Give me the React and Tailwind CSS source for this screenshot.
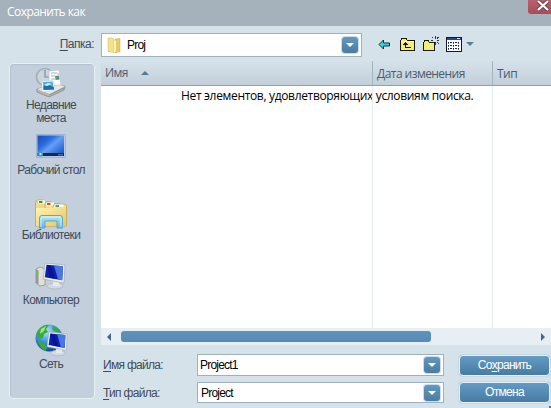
import React from 'react';

const ui = "font-['Liberation_Sans',sans-serif]";
const human = "font-['Open_Sans','Noto_Sans',sans-serif]";

function RecentIcon() {
  return (
    <svg width="32" height="31" viewBox="0 0 32 31">
      <circle cx="10" cy="10" r="8.5" fill="#cbd5dc" stroke="#a3adb3" strokeWidth="1.6" />
      <path d="M10 3v7h5" stroke="#7f8b95" strokeWidth="1.2" fill="none" />
      <path d="M2 22l18-5 10 2-1 4-15 7-12-5z" fill="#b9bab3" stroke="#85877f" strokeWidth=".8" />
      <path d="M2 22l13 5 15-8-10-2z" fill="#e9e8e0" />
      <path d="M14 4l10-1 2 15-12 1z" fill="#fbfcfb" stroke="#b6c3c6" strokeWidth=".6" />
      <path d="M16 6h6M16 9h4M16 12h4M22 7h2" stroke="#92a5b0" strokeWidth=".8" />
      <path d="M20 9l4-.4.6 4-4 .4z" fill="#4f9978" />
      <path d="M7 14l11-.5 2 10-13 1z" fill="#fff" stroke="#bed3dc" strokeWidth=".6" />
      <path d="M8 15l9.500-.5 1.600 8L8.500 23z" fill="#4dadea" />
      <path d="M8.500 19l4-2 6.500 3.500v2L8.500 23z" fill="#1f70a8" />
      <path d="M9 18l4-2 4 1-5 2z" fill="#d8f0f6" />
      <path d="M14 28l15-7" stroke="#8c8d85" />
    </svg>
  );
}

function DesktopIcon() {
  return (
    <svg width="30" height="24" viewBox="0 0 30 24">
      <defs>
        <linearGradient id="desk" x1="0" y1="0" x2="1" y2=".8">
          <stop stopColor="#164bb9" /><stop offset=".4" stopColor="#2e6de0" /><stop offset=".6" stopColor="#659ff3" /><stop offset="1" stopColor="#2263d4" />
        </linearGradient>
      </defs>
      <rect x=".5" y=".5" width="29" height="23" fill="#b9c9df" stroke="#a3b5cd" />
      <rect x="1.500" y="1.500" width="26.500" height="18" fill="url(#desk)" />
      <rect x="1.500" y="19" width="26.500" height="3" fill="#16294f" />
      <rect x="22" y="20" width="5" height="1.500" fill="#506a94" />
      <circle cx="4.500" cy="20" r="2.500" fill="#3c9fc0" />
      <circle cx="4.500" cy="20" r="1" fill="#c3f2f2" />
    </svg>
  );
}

function LibrariesIcon() {
  return (
    <svg width="32" height="30" viewBox="0 0 32 30">
      <defs>
        <linearGradient id="lib" x1="0" y1="0" x2="1" y2="1">
          <stop stopColor="#fff3b4" /><stop offset="1" stopColor="#eac65a" />
        </linearGradient>
        <linearGradient id="stand" x1="0" y1="0" x2="0" y2="1">
          <stop stopColor="#b7e9f8" /><stop offset="1" stopColor="#60b5dc" />
        </linearGradient>
      </defs>
      <path d="M.5 27V3l2-2h6l2 2h5l1 24z" fill="#f3d983" stroke="#c7a24b" strokeWidth=".8" />
      <rect x="3" y="1.500" width="7" height="3" fill="#fff" /><rect x="4" y="2" width="3.500" height="2" fill="#28a33b" />
      <path d="M10 27V5l1-2h6l2 2h6v22z" fill="#f7df8f" stroke="#c7a24b" strokeWidth=".8" />
      <rect x="11" y="3.500" width="8" height="3" fill="#fff" /><rect x="12" y="4" width="3.500" height="2" fill="#c94c30" />
      <path d="M18 27V7l1.500-2h10l2 2v20z" fill="#f7df8f" stroke="#c7a24b" strokeWidth=".8" />
      <rect x="19.500" y="5.500" width="9" height="3" fill="#fff" /><rect x="20.500" y="6" width="3.500" height="2" fill="#2d9fc1" />
      <path d="M1 9h16l2-1h12v19H1z" fill="url(#lib)" />
      <path d="M4.500 29V19q0-2.500 2.500-2.500h18q2.500 0 2.500 2.500v10h-5.500v-7h-12v7z" fill="url(#stand)" stroke="#5aa7cc" />
      <path d="M6 18h20M6 19v9M26 19v9" stroke="#e3faff" strokeWidth=".8" />
    </svg>
  );
}

function Monitor() {
  return (
    <g>
      <ellipse cx="12" cy="23" rx="8" ry="3" fill="#d3dade" stroke="#a4aeb7" strokeWidth=".6" />
      <path d="M10 17l6 1 1 5h-7z" fill="#e6eaec" />
      <path d="M2 0l20 2-1 18L0 16z" fill="#edf0ed" stroke="#9da9b5" strokeWidth=".7" />
      <path d="M3.500 1.700l16.500 1.600-.8 14L1.800 14.200z" fill="#0a20b4" />
      <path d="M11 2.500l9 .8-.8 14-4.200-.9z" fill="#4b75df" />
      <path d="M4 2l4 .4 4 13.400-5-1z" fill="#0b158a" />
    </g>
  );
}

function ComputerIcon() {
  return (
    <svg width="32" height="28" viewBox="0 0 32 28">
      <path d="M1 6l4-2 5 2v16l-5 1-4-3z" fill="#dfe0d7" stroke="#86887f" strokeWidth=".7" />
      <path d="M1 6l2.500 1.500v14L1 20z" fill="#96988f" />
      <path d="M1.500 9l2 1" stroke="#54d44b" strokeWidth="1.500" />
      <g transform="translate(8 0)"><Monitor /></g>
    </svg>
  );
}

function NetworkIcon() {
  return (
    <svg width="33" height="33" viewBox="0 0 33 33">
      <defs>
        <radialGradient id="globe" cx=".4" cy=".25" r=".8">
          <stop stopColor="#b2eaff" /><stop offset=".5" stopColor="#3c91da" /><stop offset="1" stopColor="#123d98" />
        </radialGradient>
      </defs>
      <circle cx="14" cy="14" r="13.500" fill="url(#globe)" />
      <path d="M5 4q5-4 9-3l-3 4 2 3-4 2-1 4-4 1-3-4q1-4 4-7M3 17l5 1 4 5-1 4q-6-2-8-10M18 2q6 2 8 7l-5-1-4-3z" fill="#3ba943" />
      <path d="M6 5l5-3-2 5-4 3z" fill="#a8e675" />
      <g transform="translate(12 8) scale(.92)"><Monitor /></g>
    </svg>
  );
}

function FolderIcon() {
  return (
    <svg width="14" height="17" viewBox="0 0 14 17">
      <path d="M1 1h5l1 2h6v12H1z" fill="#e6c760" />
      <path d="M1 1h4l2 2v13l-6-2z" fill="#f5e18c" stroke="#d7ba5c" strokeWidth=".5" />
      <path d="M8 2l5-.5v13L8 16z" fill="#e9cb66" stroke="#c9a949" strokeWidth=".5" />
      <path d="M7 3l2 1v10l-2 2z" fill="#fff4bc" />
    </svg>
  );
}

function BackIcon() {
  return (
    <svg width="13" height="11" viewBox="0 0 13 11">
      <path d="M1 5.500L5.500 1v3h6v3h-6v3z" fill="#32d9df" stroke="#122b31" />
    </svg>
  );
}

function UpIcon() {
  return (
    <svg width="15" height="13" viewBox="0 0 15 13" shapeRendering="crispEdges">
      <path d="M.5 12.500v-10l1-1v-1h5v1l1 1h7v10z" fill="#f1ef78" stroke="#171a18" />
      <path d="M1 3.500h13" stroke="#fffcbd" />
      <path d="M5.500 4v5.500H11M3 6.500h5M4 5.500h3" stroke="#111" fill="none" />
    </svg>
  );
}

function NewFolderIcon() {
  return (
    <svg width="17" height="16" viewBox="0 0 17 16" shapeRendering="crispEdges">
      <path d="M.5 14.500v-8l1-1v-1h4v1l1 1h5v8z" fill="#f1ef78" stroke="#171a18" />
      <path d="M12.500 0v3M12.500 6v3M8 4.500h2M14 4.500h2M9 1l1.500 1.500M15.500 1L14 2.500M14 6l2 2M10 6l1 1" stroke="#303738" />
    </svg>
  );
}

function ViewIcon() {
  return (
    <svg width="16" height="15" viewBox="0 0 16 15" shapeRendering="crispEdges">
      <rect x=".5" y=".5" width="15" height="14" fill="#fff" stroke="#15191d" />
      <rect x="1" y="1" width="14" height="2" fill="#234d93" />
      <path d="M11 1.500h3" stroke="#d9e3ef" />
      <path d="M2 5.500h12M2 8.500h12M2 11.500h12" stroke="#101b64" strokeWidth="1" strokeDasharray="1 1 2 1" />
      <path d="M2 6.500h12M2 9.500h12M2 12.500h12" stroke="#5b6391" strokeWidth="1" strokeDasharray="1 4" />
    </svg>
  );
}

function Drop() {
  return (
    <span className="flex h-4 w-4 shrink-0 items-center justify-center rounded-[3px] bg-linear-to-b from-[#6598bf] to-[#477ca3] shadow-[0_0_0_1px_#c9ddeb]">
      <svg width="8" height="4" viewBox="0 0 8 4"><path d="M0 0h8L4 4z" fill="#fff" /></svg>
    </span>
  );
}

function Place({ icon, children, className }) {
  return (
    <div className={`flex flex-col items-center ${className}`}>
      {icon}
      <div className="text-center text-[12px] leading-[13px] tracking-[-0.65px] whitespace-nowrap">{children}</div>
    </div>
  );
}

function Field({ label, hot, value, button, className, pad }) {
  return (
    <div className={`flex items-center ${className}`}>
      <div className="w-24 pl-[2px] text-[12px] tracking-[-0.7px]"><u className="underline-offset-2">{hot}</u>{label}</div>
      <div className={`flex h-full w-[247px] items-center justify-between border border-[#9eb1be] bg-white pr-[3px] text-black ${pad}`}>
        <span className="text-[12px] tracking-[-0.8px]">{value}</span>
        <Drop />
      </div>
      <button className="ml-[15px] h-[21px] w-[91px] rounded-[4px] border border-[#e5f1f8] bg-linear-to-b from-[#649bc4] to-[#477ba2] text-[12px] leading-[19px] tracking-[-0.7px] text-white shadow-[0_0_1px_#547a98]">{button}</button>
    </div>
  );
}

export default function App() {
  return (
    <div className={`relative flex h-[408px] w-[551px] flex-col overflow-hidden bg-[#d6e2ea] text-[#414b57] ${ui}`}>
      <header className="flex h-[26px] shrink-0 items-start justify-between bg-[#a5b2bb]">
        <h1 className={`pt-[3px] pl-[7px] text-[12px] leading-[18px] tracking-[-0.55px] text-white ${human}`}>Сохранить как</h1>
        <div className="flex h-[14px] w-[23px] justify-end rounded-bl-[3px] bg-linear-to-b from-[#b5606a] to-[#a94b58]">
          <svg width="15" height="12" viewBox="0 0 15 12"><path d="M2 1l10 9M12 1L2 10" stroke="#68434b" strokeWidth="4" /><path d="M2 1l10 9M12 1L2 10" stroke="#fff" strokeWidth="2.200" /></svg>
        </div>
      </header>

      <div className="flex h-[35px] shrink-0 items-start pt-[7px]">
        <div className="w-[101px] pr-[7px] text-right text-[12px] leading-[22px] tracking-[-0.5px]"><u className="underline-offset-2">П</u>апка:</div>
        <div className="flex h-6 w-[261px] items-center border border-[#9eb1be] bg-white pr-[3px] pl-[5px] text-black">
          <FolderIcon />
          <span className="flex-1 pl-[6px] text-[12px] tracking-[-0.8px]">Proj</span>
          <Drop />
        </div>
        <div className="flex h-[22px] items-center pl-4">
          <BackIcon />
          <span className="ml-[9px]"><UpIcon /></span>
          <span className="-mt-px ml-2"><NewFolderIcon /></span>
          <span className="mt-px ml-[6px]"><ViewIcon /></span>
          <svg className="ml-1" width="8" height="4" viewBox="0 0 8 4"><path d="M0 0h8L4 4z" fill="#5c7c99" /></svg>
        </div>
      </div>

      <div className="flex min-h-0 flex-1">
        <aside className="mt-[2px] ml-[9px] h-[336px] w-[86px] shrink-0 rounded-[4px] border border-[#e7f0f5] bg-[#c3cfdd] pr-[2px] shadow-[inset_1px_1px_1px_#b2c0cf]">
          <Place className="h-[70px] pt-[3px]" icon={<RecentIcon />}><div className="pt-px">Недавние<br />места</div></Place>
          <Place className="h-[65px]" icon={<DesktopIcon />}><div className="pt-[6px]">Рабочий стол</div></Place>
          <Place className="h-[64px]" icon={<LibrariesIcon />}><div>Библиотеки</div></Place>
          <Place className="h-[61px]" icon={<ComputerIcon />}><div className="pt-[3px]">Компьютер</div></Place>
          <Place className="h-[60px]" icon={<NetworkIcon />}><div className="pt-px">Сеть</div></Place>
        </aside>

        <main className="ml-[6px] flex w-[450px] flex-col">
          <div className={`flex h-[25px] shrink-0 border-b border-[#90a1ac] bg-linear-to-b from-[#d6e2ea] to-[#c2cfda] text-[12px] leading-[26px] tracking-[-0.55px] text-[#4a5c6d] ${human}`}>
            <div className="flex w-[271px] items-center pl-1">
              Имя
              <svg className="ml-[13px]" width="8" height="4" viewBox="0 0 8 4"><path d="M0 4h8L4 0z" fill="#547998" /></svg>
            </div>
            <div className="w-[120px] border-l border-[#a4b4bf] pl-1 whitespace-nowrap">Дата изменения</div>
            <div className="flex-1 border-l border-[#a4b4bf] pl-1">Тип</div>
          </div>
          <div className="grid h-[242px] shrink-0 grid-cols-[271px_121px_1fr] bg-white">
            <div className={`col-span-3 col-start-1 row-start-1 pl-[80px] pt-px text-[12px] leading-[18px] tracking-[-0.335px] whitespace-nowrap text-black ${human}`}>Нет элементов, удовлетворяющих условиям поиска.</div>
            <div className="col-start-2 row-start-1 border-x border-[#e6ebef]" />
          </div>
          <div className="flex h-[17px] shrink-0 items-center bg-[#e7eff5] pr-[6px] pl-[6px]">
            <svg width="4" height="8" viewBox="0 0 4 8"><path d="M4 0v8L0 4z" fill="#41698a" /></svg>
            <div className="ml-[10px] h-[11px] w-[310px] rounded-[3px] bg-linear-to-b from-[#6093bb] to-[#568bb3]" />
            <svg className="ml-auto" width="4" height="8" viewBox="0 0 4 8"><path d="M0 0v8l4-4z" fill="#41698a" /></svg>
          </div>
          <Field className="mt-[9px] h-[22px] shrink-0" hot="И" label="мя файла:" value="Project1" pad="pl-[2px]" button={<>Со<u className="underline-offset-2">х</u>ранить</>} />
          <Field className="mt-[6px] h-[21px] shrink-0" hot="Т" label="ип файла:" value="Project" pad="pl-[3px]" button="Отмена" />
        </main>
      </div>
      <span className="absolute right-0 bottom-0 h-[2px] w-[2px] bg-[#55738c]" />
    </div>
  );
}
